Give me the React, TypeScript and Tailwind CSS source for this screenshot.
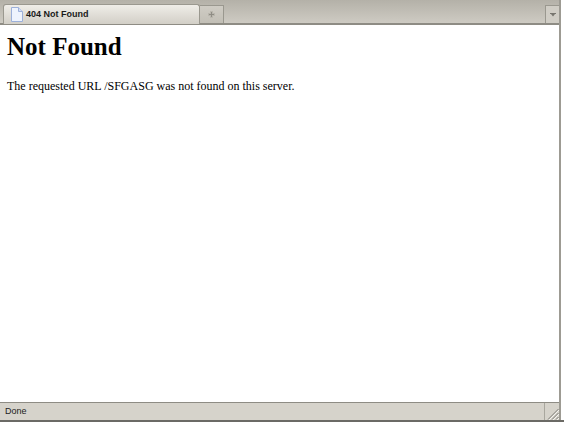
import * as React from "react"

function PageIcon() {
  return (
    <svg width="12" height="15" viewBox="0 0 12 15" className="shrink-0">
      <path d="M0.5 0.5H7.5L11.5 4.5V14.5H0.5Z" fill="#eef3fd" stroke="#9cb0da" />
      <path d="M7.5 0.5V4.5H11.5" fill="#d3def5" stroke="#9cb0da" />
    </svg>
  )
}

function PlusIcon() {
  return (
    <svg width="7" height="7" viewBox="0 0 7 7">
      <path d="M2 0H5V2H7V5H5V7H2V5H0V2H2Z" fill="#b9b6ad" />
      <path d="M3 1H4V3H6V4H4V6H3V4H1V3H3Z" fill="#8f8d85" />
    </svg>
  )
}

function Chevron() {
  return (
    <svg width="6" height="4" viewBox="0 0 6 4">
      <path d="M0 0H6V1H5L3 3.5L1 1H0Z" fill="#77756e" />
    </svg>
  )
}

function Grip() {
  return (
    <svg width="12" height="12" viewBox="0 0 12 12">
      <path d="M11.5 1L1 11.5M11.5 5L5 11.5M11.5 9L9 11.5" stroke="#7d7b74" strokeWidth="1" fill="none" />
      <path d="M12 2L2 12M12 6L6 12M12 10L10 12" stroke="#f4f3ef" strokeWidth="1" fill="none" />
    </svg>
  )
}

export default function App() {
  return (
    <div className="flex h-[422px] w-[564px] flex-col overflow-hidden bg-white">
      <div className="mr-[3px] flex flex-1 flex-col border-r-2 border-[#9d9b93]">
        <div className="flex h-[25px] shrink-0 items-end border-b-2 border-[#8e8c84] bg-gradient-to-b from-[#b4b1a8] to-[#cecbc3] pl-[3px]">
          <div className="-mb-[1px] flex h-[20px] w-[197px] items-center gap-[3px] rounded-t-[3px] border border-b-0 border-[#9a988f] bg-gradient-to-b from-[#efede8] to-[#d2cfc7] pl-[7px] font-['Liberation_Sans',sans-serif] text-[9px] font-bold text-[#1a1a1a]">
            <PageIcon />
            <span>404 Not Found</span>
          </div>
          <div className="flex h-[18px] w-[24px] items-center justify-center border border-b-0 border-l-0 border-[#9a988f] bg-gradient-to-b from-[#cfccc4] to-[#c2bfb6]">
            <PlusIcon />
          </div>
          <div className="flex-1" />
          <div className="flex h-[18px] w-[14px] items-center justify-center border-t border-l border-[#9a988f] bg-[#d0cdc5]">
            <Chevron />
          </div>
        </div>

        <main className="flex-1 bg-white px-[7px] font-['Liberation_Serif',serif] text-black">
          <h1 className="mt-[7px] text-[25px] leading-[30px] font-bold">Not Found</h1>
          <p className="mt-[17px] text-[12px] leading-[15px]">
            The requested URL /SFGASG was not found on this server.
          </p>
        </main>

        <div className="flex h-[18px] shrink-0 border-t border-t-[#8e8c84] bg-[#d6d3cb] font-['Liberation_Sans',sans-serif] text-[9px] text-[#222]">
          <div className="flex flex-1 items-center pl-[5px]">Done</div>
          <div className="flex w-[15px] items-end justify-end border-l border-[#a9a79e]">
            <Grip />
          </div>
        </div>
      </div>
      <div className="h-[2px] shrink-0 bg-[#6b6a65]" />
    </div>
  )
}
